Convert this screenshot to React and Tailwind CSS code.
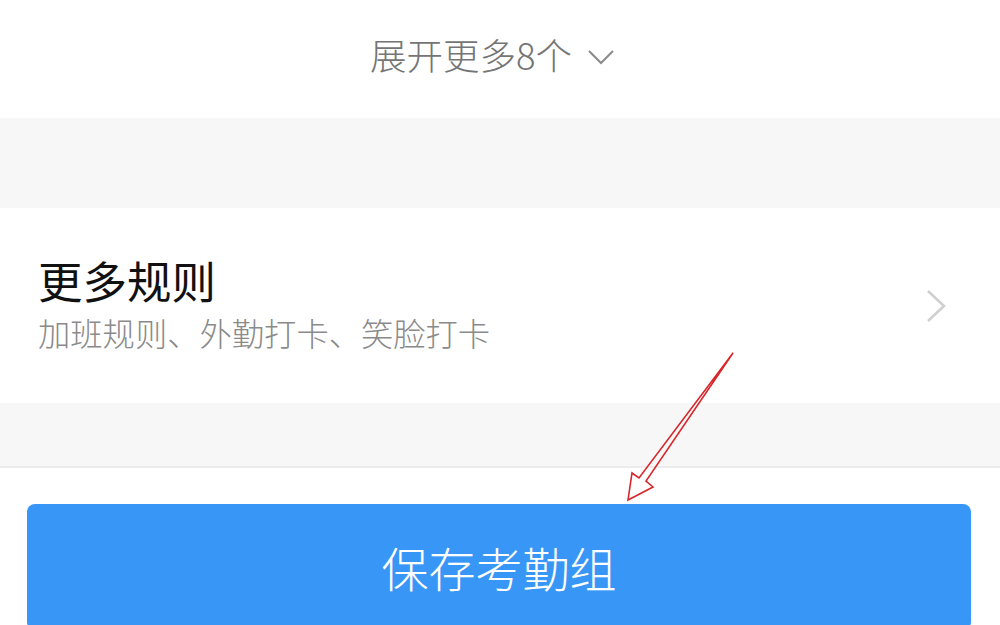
import React from 'react';

const font = { fontFamily: '"Noto Sans CJK SC", "Noto Sans", sans-serif' };

// hollow red arrow drawn over the page, pointing at the save button
const Arrow = () => (
  <svg className="absolute left-0 top-0 pointer-events-none" width="1000" height="625">
    <polygon
      points="733,353 646,481 653,487 628,500 632,473 639,478"
      fill="none"
      stroke="#d8262b"
      strokeWidth="1.6"
      strokeLinejoin="miter"
    />
  </svg>
);

const App = () => {
  return (
    <div className="relative w-[1000px] h-[625px] overflow-hidden bg-white" style={font}>
      <div className="h-[118px] flex items-center justify-center pb-[8px] pr-[16px]">
        <span className="text-[36.5px] font-light text-[#757575]">展开更多8个</span>
        <svg className="ml-[16px] mt-[4px]" width="26" height="16" viewBox="0 0 26 16">
          <path d="M1 2 L13 14 L25 2" fill="none" stroke="#8a8a8a" strokeWidth="2" />
        </svg>
      </div>

      <div className="h-[90px] bg-[#f7f7f7]"></div>

      <div className="h-[195px] flex items-center justify-between pl-[38px] pr-[54px]">
        <div className="flex flex-col pb-[6px]">
          <span className="text-[44.5px] leading-[56px] text-[#111111]">更多规则</span>
          <span className="text-[32.3px] font-light leading-[44px] text-[#8a8a8a] mt-[2px]">加班规则、外勤打卡、笑脸打卡</span>
        </div>
        <svg width="20" height="34" viewBox="0 0 20 34">
          <path d="M2 2 L18 17 L2 32" fill="none" stroke="#cfcfcf" strokeWidth="2.5" />
        </svg>
      </div>

      <div className="h-[65px] bg-[#f7f7f7] border-b-2 border-[#ececec]"></div>

      <div className="pt-[36px] pl-[27px]">
        <button className="w-[944px] h-[126px] rounded-[8px] bg-[#3897f6] flex items-center justify-center">
          <span className="text-[47px] font-light text-white">保存考勤组</span>
        </button>
      </div>

      <Arrow />
    </div>
  );
};

export default App;
